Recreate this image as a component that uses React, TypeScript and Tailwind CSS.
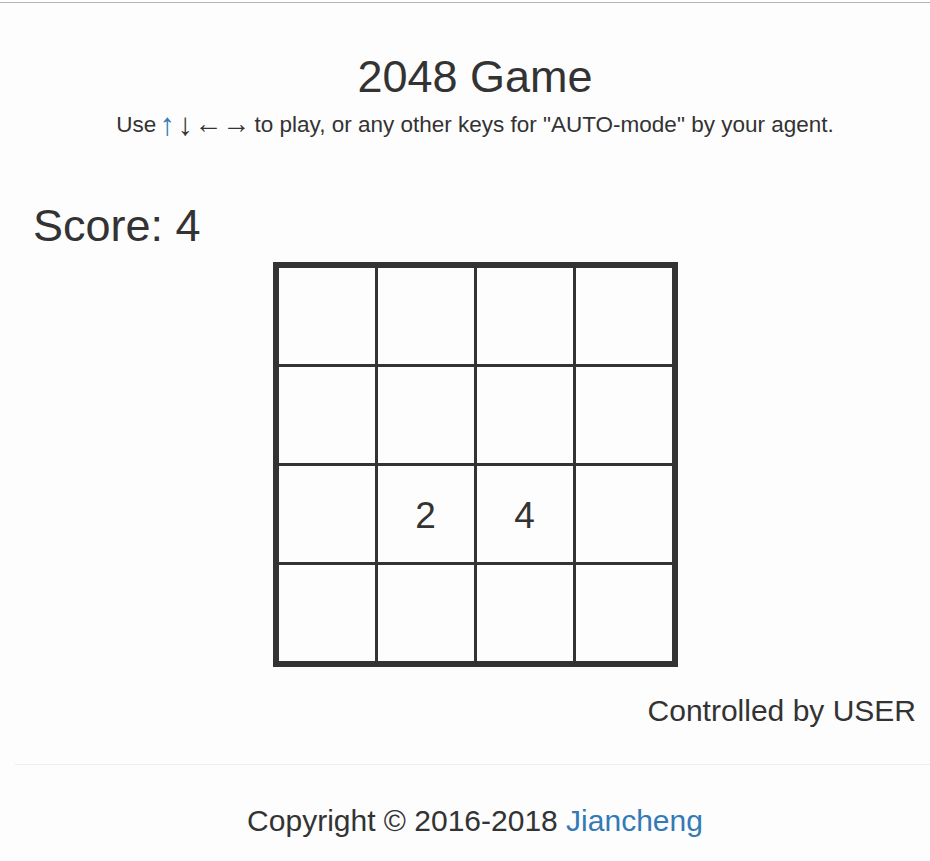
const board: (number | null)[][] = [
  [null, null, null, null],
  [null, null, null, null],
  [null, 2, 4, null],
  [null, null, null, null],
];

function Board() {
  return (
    <div className="mx-auto grid w-[405px] grid-cols-4 gap-[3px] bg-[#333] p-[6px]">
      {board.flat().map((v, i) => (
        <div
          key={i}
          className="flex h-[96px] items-center justify-center bg-[#fdfdfd] text-[37px] leading-none"
        >
          <span className="mt-[2px]">{v ?? ""}</span>
        </div>
      ))}
    </div>
  );
}

export default function App() {
  return (
    <div className="min-h-[861px] overflow-hidden bg-[#fdfdfd] text-[#333] font-['Liberation_Sans',Arial,sans-serif]">
      <div className="mt-[2px] h-px bg-[#b5b5b5]" />
      <div className="w-[950px] px-[15px]">
        <div className="px-[15px]">
          {/* header */}
          <h1 className="mt-[49px] text-center text-[45px] leading-[50px]">2048 Game</h1>
          <p className="mt-[8px] text-center text-[22.5px] leading-[30px]">
            Use
            <span className="ml-[3px] inline-block w-[16px] text-center align-[-3px] text-[31px] leading-[0] text-[#337ab7]">↑</span>
            <span className="ml-[2px] inline-block w-[16px] text-center align-[-3px] text-[31px] leading-[0] text-[#333]">↓</span>
            <span className="ml-[1px] inline-block w-[28px] text-center align-[-1px] text-[28px] leading-[0]">←</span>
            <span className="mr-[-2px] inline-block w-[28px] text-center align-[-1px] text-[28px] leading-[0]">→</span>{" "}
            to play, or any other keys for "AUTO-mode" by your agent.
          </p>

          <div className="mt-[62px] ml-[3px] text-[45px] leading-[48px]">Score: 4</div>

          <div className="mt-[12px]">
            <Board />
          </div>

          <div className="mt-[27px] mr-[4px] text-right text-[30px] leading-[34px]">Controlled by USER</div>
        </div>

        <hr className="mt-[36px] border-t border-[#eee]" />

        <footer className="mt-[39px] px-[15px] text-center text-[30px] leading-[34px]">
          Copyright © 2016-2018 <a className="text-[#337ab7]">Jiancheng</a>
        </footer>
      </div>
    </div>
  );
}
